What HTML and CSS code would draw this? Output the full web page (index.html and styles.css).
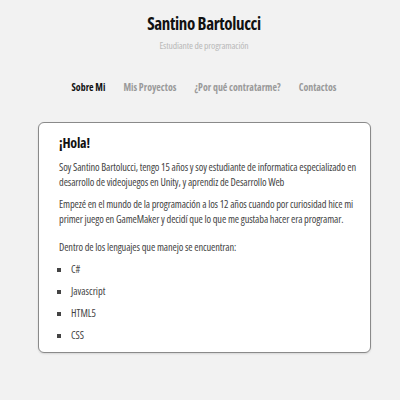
FILE: index.html
```html
<!DOCTYPE html>
<html lang="es">
<head>
<meta charset="utf-8">
<link rel="stylesheet" href="styles.css">
</head>
<body>
<header class="header">
  <h1 class="title">Santino Bartolucci</h1>
  <p class="subtitle">Estudiante de programación</p>
</header>
<nav class="nav">
  <a class="nav-link active">Sobre Mi</a>
  <a class="nav-link">Mis Proyectos</a>
  <a class="nav-link">¿Por qué contratarme?</a>
  <a class="nav-link">Contactos</a>
</nav>
<main class="card">
  <h2 class="card-title">¡Hola!</h2>
  <p class="para">Soy Santino Bartolucci, tengo 15 años y soy estudiante de informatica especializado en<br>desarrollo de videojuegos en Unity, y aprendiz de Desarrollo Web</p>
  <p class="para">Empezé en el mundo de la programación a los 12 años cuando por curiosidad hice mi<br>primer juego en GameMaker y decidí que lo que me gustaba hacer era programar.</p>
  <p class="para intro">Dentro de los lenguajes que manejo se encuentran:</p>
  <ul class="langs">
    <li>C#</li>
    <li>Javascript</li>
    <li>HTML5</li>
    <li>CSS</li>
  </ul>
</main>
</body>
</html>
```
FILE: styles.css
```css
html, body {
  margin: 0;
  padding: 0;
}
body {
  background: #f2f2f2;
  font-family: "Open Sans", "DejaVu Sans Condensed", sans-serif;
  font-stretch: 75%;
  color: #444;
  width: 392px;
  height: 400px;
  padding-left: 8px;
  overflow: hidden;
}
.header {
  text-align: center;
  padding-top: 10px;
}
.title {
  margin: 0;
  font-size: 17px;
  letter-spacing: -0.35px;
  font-weight: 700;
  color: #111;
  line-height: 28px;
}
.subtitle {
  margin: 0;
  font-size: 9.6px;
  letter-spacing: -0.15px;
  color: #b8b8b8;
  line-height: 15px;
}
.nav {
  display: flex;
  justify-content: center;
  gap: 18px;
  margin-top: 25px;
}
.nav-link {
  font-size: 9.9px;
  font-weight: 700;
  color: #9a9a9a;
  line-height: 18px;
}
.nav-link.active {
  color: #111;
}
.card {
  display: block;
  margin: 26px 29px 0 30px;
  background: #fff;
  border: 1px solid #8a8a8a;
  border-radius: 6px;
  padding: 9px 8px 9px 20px;
  box-shadow: 0 1px 2px rgba(0, 0, 0, 0.12);
}
.card-title {
  margin: 0 0 6px;
  font-size: 14px;
  letter-spacing: -0.2px;
  font-weight: 700;
  color: #111;
  line-height: 22px;
}
.para {
  margin: 0 0 7px;
  font-size: 10.4px;
  letter-spacing: -0.12px;
  line-height: 15px;
  color: #444;
  white-space: nowrap;
}
.intro {
  margin-top: 13px;
}
.langs {
  list-style: square;
  margin: 0;
  padding-left: 12px;
}
.langs li {
  font-size: 10.4px;
  line-height: 15px;
  margin-top: 7px;
  color: #444;
}
```
